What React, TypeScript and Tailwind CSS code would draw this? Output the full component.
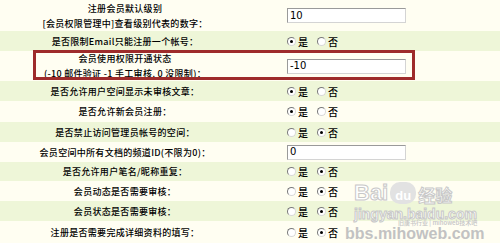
import React from "react";

const CREAM = "bg-[#fffef2]";
const GREEN = "bg-[#eef6d8]";

function Radio({ checked }: { checked: boolean }) {
  return (
    <span className="inline-flex items-center justify-center w-[9px] h-[9px] rounded-full border border-t-[#7a7a7a] border-l-[#7a7a7a] border-b-[#d8d8d8] border-r-[#d8d8d8] bg-white">
      {checked ? <span className="w-[3px] h-[3px] rounded-full bg-black" /> : null}
    </span>
  );
}

function YesNo({ yes }: { yes: boolean }) {
  return (
    <div className="flex items-center text-[10px] font-medium text-black">
      <Radio checked={yes} />
      <span className="ml-[2px]">是</span>
      <span className="ml-[9px]" />
      <Radio checked={!yes} />
      <span className="ml-[2px]">否</span>
    </div>
  );
}

function TextInput({ value }: { value: string }) {
  return (
    <div className="w-[119px] h-[15px] bg-white border border-t-[#9a9a9a] border-l-[#9a9a9a] border-b-[#d4d4d4] border-r-[#d4d4d4] flex items-center pl-[2px] text-[10px] leading-none text-black [font-family:'DejaVu_Sans',sans-serif]">
      {value}
    </div>
  );
}

type Row = {
  label: string[];
  h: number;
  bg: string;
  control: React.ReactNode;
};

const rows: Row[] = [
  { label: ["注册会员默认级别", "[会员权限管理中]查看级别代表的数字："], h: 31, bg: CREAM, control: <TextInput value="10" /> },
  { label: ["是否限制Email只能注册一个帐号："], h: 20, bg: GREEN, control: <YesNo yes /> },
  { label: ["会员使用权限开通状态", "(-10 邮件验证 -1 手工审核, 0 没限制)："], h: 30, bg: CREAM, control: <TextInput value="-10" /> },
  { label: ["是否允许用户空间显示未审核文章："], h: 20, bg: GREEN, control: <YesNo yes /> },
  { label: ["是否允许新会员注册："], h: 21, bg: CREAM, control: <YesNo yes /> },
  { label: ["是否禁止访问管理员帐号的空间："], h: 20, bg: GREEN, control: <YesNo yes={false} /> },
  { label: ["会员空间中所有文档的频道ID(不限为0)："], h: 20, bg: CREAM, control: <TextInput value="0" /> },
  { label: ["是否允许用户笔名/昵称重复："], h: 19, bg: GREEN, control: <YesNo yes={false} /> },
  { label: ["会员动态是否需要审核："], h: 20, bg: CREAM, control: <YesNo yes={false} /> },
  { label: ["会员状态是否需要审核："], h: 20, bg: GREEN, control: <YesNo yes={false} /> },
  { label: ["注册是否需要完成详细资料的填写："], h: 23, bg: CREAM, control: <YesNo yes={false} /> },
];

const heightClass: Record<number, string> = {
  19: "h-[19px]",
  20: "h-[20px]",
  21: "h-[21px]",
  23: "h-[23px]",
  30: "h-[30px]",
  31: "h-[31px]",
};

export default function App() {
  return (
    <div className="relative w-[500px] h-[243px] overflow-hidden bg-[#fffef2] [font-family:'Noto_Sans_CJK_SC','DejaVu_Sans',sans-serif] text-[9px] font-medium text-black">
      <div className="flex flex-col">
        {rows.map((r, i) => (
          <div key={i} className={`flex ${heightClass[r.h]} ${r.bg}`}>
            <div className="w-[250px] flex flex-col items-center justify-center leading-[15px] tracking-[0.3px]">
              {r.label.map((l, j) => (
                <span key={j} className="whitespace-nowrap">{l}</span>
              ))}
            </div>
            <div className="flex-1 flex items-center pl-[37px]">{r.control}</div>
          </div>
        ))}
      </div>

      {/* red annotation box */}
      <div className="absolute left-[33px] top-[50px] w-[382px] h-[30px] border-[3px] border-[#9e2b2b] pointer-events-none" />

      {/* watermark */}
      <div className="absolute left-[354px] top-[182px] pointer-events-none select-none">
        <div className="flex items-end h-[22px]">
          <span className="text-[22px] font-bold leading-none text-white [font-family:'Liberation_Sans',sans-serif] [-webkit-text-stroke:1px_#c8c8c8]">Bai</span>
          <span className="ml-[2px] w-[26px] h-[22px] rounded-[10px] bg-[#e2e2e2] flex items-end justify-center text-[13px] font-bold leading-[17px] text-white [font-family:'Liberation_Sans',sans-serif]">du</span>
          <span className="ml-[2px] text-[17px] font-bold leading-[18px] text-white [-webkit-text-stroke:1px_#c8c8c8]">经验</span>
        </div>
        <div className="mt-[3px] text-[14px] font-bold leading-none text-white [font-family:'Liberation_Sans',sans-serif] [-webkit-text-stroke:1px_#c8c8c8]">jingyan.baidu.com</div>
      </div>
      <div className="absolute left-[398px] top-[220px] text-[6px] leading-none text-[#c4c4c4] pointer-events-none whitespace-nowrap">旧唐书行业 | mihoweb技术吧</div>
      <div className="absolute left-[345px] top-[226px] text-[16px] font-bold leading-none text-[#c2c2c2] [font-family:'Liberation_Sans',sans-serif] pointer-events-none whitespace-nowrap">bbs.mihoweb.com</div>
    </div>
  );
}
